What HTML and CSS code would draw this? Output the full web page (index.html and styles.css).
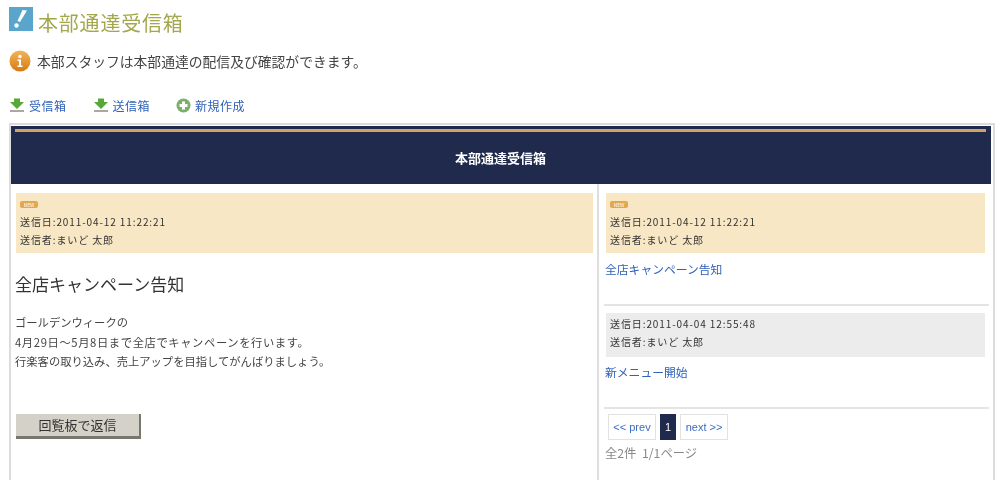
FILE: index.html
```html
<!DOCTYPE html>
<html lang="ja">
<head>
<meta charset="utf-8">
<title>本部通達受信箱</title>
<link rel="stylesheet" href="styles.css">
</head>
<body>
<div class="title-row">
  <svg class="title-icon" width="24" height="24" viewBox="0 0 24 24"><rect width="24" height="24" fill="#5aa5cb"/><path d="M13.500 3 L18 3.500 L11 15 L8.500 14 Z" fill="#fff"/><circle cx="7.500" cy="18.500" r="2.200" fill="#fff"/></svg>
  <h1 class="title">本部通達受信箱</h1>
</div>
<div class="info-row">
  <svg width="22" height="22" viewBox="0 0 22 22"><defs><linearGradient id="o" x1="0" y1="0" x2="0" y2="1"><stop offset="0" stop-color="#f2b55c"/><stop offset="1" stop-color="#d67a12"/></linearGradient></defs><circle cx="11" cy="11" r="10.500" fill="url(#o)"/><circle cx="11" cy="6.500" r="1.700" fill="#fff"/><path d="M8.500 9.500h3.500v6h1.500v1.500h-5v-1.500h1.500v-4.500h-1.500z" fill="#fff"/></svg>
  <p class="info">本部スタッフは本部通達の配信及び確認ができます。</p>
</div>
<nav class="tabs">
  <a class="tab"><svg width="16" height="14" viewBox="0 0 16 14"><path d="M5 0.500h6V4h4L8 11 1 4h4z" fill="#58a838"/><rect x="1" y="12" width="14" height="2" fill="#a9a9a0"/></svg>受信箱</a>
  <a class="tab"><svg width="16" height="14" viewBox="0 0 16 14"><path d="M5 0.500h6V4h4L8 11 1 4h4z" fill="#58a838"/><rect x="1" y="12" width="14" height="2" fill="#a9a9a0"/></svg>送信箱</a>
  <a class="tab"><svg width="15" height="15" viewBox="0 0 15 15"><circle cx="7.500" cy="7.500" r="7" fill="#7bb069"/><path d="M6 3.500h3V6h2.500v3H9v2.500H6V9H3.500V6H6z" fill="#fff"/></svg>新規作成</a>
</nav>
<main class="panel">
  <header class="panel-head">
    <div class="gold-line"></div>
    <div class="panel-title">本部通達受信箱</div>
  </header>
  <div class="columns">
    <section class="detail">
      <div class="meta meta-new">
        <span class="new-badge">NEW</span>
        <div>送信日:2011-04-12 11:22:21</div>
        <div>送信者:まいど 太郎</div>
      </div>
      <h2 class="subject">全店キャンペーン告知</h2>
      <p class="body-text">ゴールデンウィークの<br><span class="body-wide">4月29日～5月8日まで全店でキャンペーンを行います。</span><br>行楽客の取り込み、売上アップを目指してがんばりましょう。</p>
      <button class="reply">回覧板で返信</button>
    </section>
    <aside class="list">
      <div class="item">
        <div class="meta meta-new">
          <span class="new-badge">NEW</span>
          <div>送信日:2011-04-12 11:22:21</div>
          <div>送信者:まいど 太郎</div>
        </div>
        <a class="item-link">全店キャンペーン告知</a>
      </div>
      <div class="item item-second">
        <div class="meta meta-read">
          <div>送信日:2011-04-04 12:55:48</div>
          <div>送信者:まいど 太郎</div>
        </div>
        <a class="item-link">新メニュー開始</a>
      </div>
      <div class="pager">
        <a class="page-btn">&lt;&lt; prev</a>
        <span class="page-cur">1</span>
        <a class="page-btn">next &gt;&gt;</a>
      </div>
      <div class="count">全2件&nbsp;&nbsp;1/1ページ</div>
    </aside>
  </div>
</main>
</body>
</html>
```
FILE: styles.css
```css
* { box-sizing: border-box; }
html, body { height: 480px; overflow: hidden; }
body {
  margin: 0;
  padding: 7px 5px 0 9px;
  background: #fff;
  font-family: "Noto Sans CJK JP", "Liberation Sans", sans-serif;
  color: #444;
  filter: blur(0.35px);
}
.title-row { display: flex; align-items: flex-start; gap: 5px; height: 32px; }
.title { margin: 0; font-size: 20px; letter-spacing: 0.8px; font-weight: 400; color: #a3a84e; line-height: 32px; }
.info-row { display: flex; align-items: center; gap: 6px; margin-top: 11px; height: 22px; }
.info { margin: 0; font-size: 13.800px; color: #444; }
.tabs { display: flex; gap: 26px; margin-top: 23px; height: 20px; align-items: center; }
.tab { display: flex; align-items: center; gap: 4px; font-size: 12px; letter-spacing: 0.5px; color: #2f62b8; }
.panel {
  margin-top: 8px;
  height: 357px;
  border: 2px solid #dcdcdc;
  border-bottom: 0;
  padding-top: 1px;
}
.panel-head { height: 58px; background: #1f2a4d; padding: 3px 5px 0 4px; margin-right: 2px; }
.gold-line { height: 3px; background: #cfa566; }
.panel-title { margin-top: 17px; text-align: center; color: #fff; font-size: 13px; font-weight: 700; line-height: 18px; }
.columns { display: grid; grid-template-columns: 588px 1fr; height: 296px; }
.detail { padding: 9px 4px 0 5px; border-right: 2px solid #dedede; }
.meta { padding: 4px 4px; font-size: 10px; letter-spacing: 0.9px; line-height: 18px; color: #333; }
.meta-new { background: #f8e7c4; height: 60px; padding-top: 5px; }
.meta-read { background: #ececec; height: 44px; padding-top: 2px; }
.new-badge {
  display: block;
  width: 18px;
  height: 7px;
  margin-top: 3px;
  margin-bottom: 5px;
  background: #e3a84e;
  border-radius: 2px;
  color: #fff;
  font-size: 5px;
  letter-spacing: 0;
  line-height: 7px;
  text-align: center;
}
.subject { margin: 20px 0 0 -1px; font-size: 17px; font-weight: 400; color: #333; line-height: 22px; }
.body-text { margin: 18px 0 0 -1px; font-size: 11.300px; line-height: 19.500px; color: #444; }
.body-wide { letter-spacing: 0.6px; }
.reply {
  display: block;
  margin: 42px 0 0 0;
  width: 125px;
  height: 25px;
  padding: 0;
  border: 0;
  border-right: 2px solid #77776f;
  border-bottom: 3px solid #77776f;
  background: #d4d1c8;
  font-family: inherit;
  font-size: 13px;
  color: #333;
}
.list { padding: 9px 4px 0 5px; }
.item { height: 113px; border-bottom: 2px solid #e4e4e4; }
.item-second { height: 103px; padding-top: 7px; }
.item-link { display: block; margin: 6px 0 0 1px; font-size: 11.800px; line-height: 20px; color: #2f62b8; }
.item-second .item-link { margin-top: 5px; }
.list .meta { margin: 0 4px 0 2px; }
.pager { display: flex; gap: 4px; margin: 5px 0 0 4px; height: 26px; }
.page-btn {
  display: flex;
  align-items: center;
  justify-content: center;
  width: 48px;
  border: 1px solid #e2e2e2;
  font-size: 11px;
  color: #3d6cc0;
  font-family: "Liberation Sans", sans-serif;
}
.page-cur {
  display: flex;
  align-items: center;
  justify-content: center;
  width: 16px;
  background: #1f2a4d;
  color: #fff;
  font-size: 11px;
  font-family: "Liberation Sans", sans-serif;
}
.count { margin: 4px 0 0 1px; font-size: 12.300px; line-height: 18px; color: #888; }
```
